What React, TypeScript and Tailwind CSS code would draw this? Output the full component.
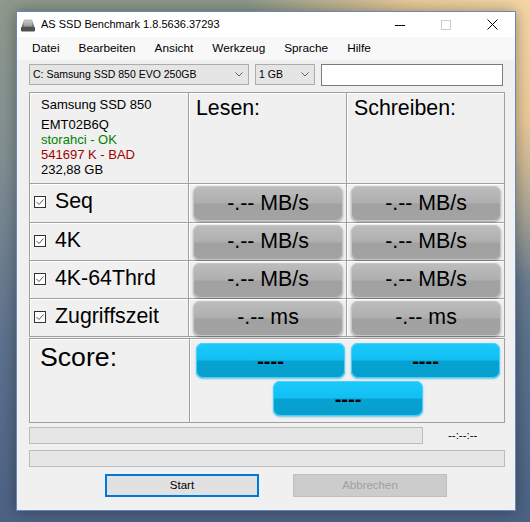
const rows = [
    {label: "Seq", read: "-.-- MB/s", write: "-.-- MB/s", h: "h-[38px]"},
    {label: "4K", read: "-.-- MB/s", write: "-.-- MB/s", h: "h-[37px]"},
    {label: "4K-64Thrd", read: "-.-- MB/s", write: "-.-- MB/s", h: "h-[37px]"},
    {label: "Zugriffszeit", read: "-.-- ms", write: "-.-- ms", h: "h-[37px]"},
];

const menu = ["Datei", "Bearbeiten", "Ansicht", "Werkzeug", "Sprache", "Hilfe"];

export default function App() {
    return (
        <div className="h-[522px] w-[530px] overflow-hidden bg-[radial-gradient(circle_at_100%_0%,#f4d6a6_0%,#e9c998_16%,rgba(200,180,150,0)_38%),linear-gradient(180deg,#8e998c_0%,#818f92_30%,#5c718d_65%,#4c6284_100%)] pl-[16px] pt-[11px] font-['Liberation_Sans',Arial,sans-serif] text-black">
            <div className="flex h-[500px] w-[500px] flex-col border border-[#6788b8] bg-[#f0f0f0] shadow-[0_0_14px_rgba(0,0,0,0.35)]">
                <TitleBar />
                <div className="flex h-[23px] items-center gap-[19px] bg-[#f8f8f8] pl-[15px] pt-[1px] text-[11.8px]">
                    {menu.map((m) => (
                        <span key={m}>{m}</span>
                    ))}
                </div>

                <div className="flex flex-col px-[12px] pt-[4px]">
                    <div className="flex items-start gap-[6px] text-[10.5px]">
                        <Select width="w-[221px]" text="C: Samsung SSD 850 EVO 250GB" />
                        <Select width="w-[60px]" text="1 GB" />
                        <div className="h-[22px] w-[183px] border border-[#7a7a7a] bg-white" />
                    </div>

                    <div className="mt-[6px] grid w-[476px] grid-cols-[158px_157px_157px] gap-px bg-[#a0a0a0] p-px">
                        <div className="h-[90px] border-l border-t border-white bg-[#f0f0f0] pl-[10px] pt-[3px] text-[13px] leading-[15px]">
                            <p className="mb-[5px]">Samsung SSD 850</p>
                            <p>EMT02B6Q</p>
                            <p className="text-[#008000]">storahci - OK</p>
                            <p className="text-[#a00000]">541697 K - BAD</p>
                            <p>232,88 GB</p>
                        </div>
                        <div className="h-[90px] border-l border-t border-white bg-[#f0f0f0] pl-[6px] pt-[4px] text-[21.33px] leading-none">
                            Lesen:
                        </div>
                        <div className="h-[90px] border-l border-t border-white bg-[#f0f0f0] pl-[6px] pt-[4px] text-[21.33px] leading-none">
                            Schreiben:
                        </div>

                        {rows.map((row) => (
                            <Row key={row.label} {...row} />
                        ))}
                    </div>

                    <div className="mt-px grid w-[476px] grid-cols-[159px_314px] gap-px bg-[#a0a0a0] p-px">
                        <div className="h-[83px] border-l border-t border-white bg-[#f0f0f0] pl-[9px] pt-[4px] text-[26.67px] leading-none">
                            Score:
                        </div>
                        <div className="flex h-[83px] flex-col border-l border-t border-white bg-[#f0f0f0] pt-[3px]">
                            <div className="flex gap-[6px] pl-[5px]">
                                <ScoreButton width="w-[149px]" />
                                <ScoreButton width="w-[149px]" />
                            </div>
                            <div className="mt-[3px] pl-[82px]">
                                <ScoreButton width="w-[150px]" />
                            </div>
                        </div>
                    </div>

                    <div className="mt-[4px] flex items-center">
                        <div className="h-[17px] w-[394px] border border-[#bcbcbc] bg-[#e6e6e6]" />
                        <span className="ml-[25px] text-[11.5px]">--:--:--</span>
                    </div>
                    <div className="mt-[6px] h-[17px] w-[476px] border border-[#bcbcbc] bg-[#e6e6e6]" />

                    <div className="mt-[7px] flex gap-[34px] pl-[76px] text-[11.5px]">
                        <button className="flex h-[23px] w-[154px] items-center justify-center border-2 border-[#0078d7] bg-[#e1e1e1]">
                            Start
                        </button>
                        <button className="flex h-[23px] w-[154px] items-center justify-center border border-[#bfbfbf] bg-[#cccccc] text-[#a0a0a0]">
                            Abbrechen
                        </button>
                    </div>
                </div>
            </div>
        </div>
    );
}

function TitleBar() {
    return (
        <div className="flex h-[25px] items-center bg-white">
            <svg width="16" height="14" viewBox="0 0 16 14" className="ml-[3px]">
                <defs>
                    <linearGradient id="drv" x1="0" y1="0" x2="0" y2="1">
                        <stop offset="0" stopColor="#c4c4c4" />
                        <stop offset="1" stopColor="#6c6c6c" />
                    </linearGradient>
                </defs>
                <path d="M4 1.5 H12 L14.5 9 H1.5 Z" fill="url(#drv)" />
                <rect x="1" y="9" width="14" height="4.5" rx="1" fill="#505050" />
                <path d="M5 3 V8.5 M7 3 V8.5 M9 3 V8.5 M11 3 V8.5" stroke="#e4e4e4" strokeWidth="0.7" />
            </svg>
            <span className="ml-[5px] text-[11px]">AS SSD Benchmark 1.8.5636.37293</span>
            <div className="ml-auto flex h-full">
                <div className="flex w-[46px] items-center justify-center">
                    <svg width="10" height="10" viewBox="0 0 10 10">
                        <path d="M0 5.5 H10" stroke="#000" strokeWidth="1" />
                    </svg>
                </div>
                <div className="flex w-[46px] items-center justify-center">
                    <svg width="10" height="10" viewBox="0 0 10 10">
                        <rect x="0.5" y="0.5" width="9" height="9" fill="none" stroke="#cccccc" />
                    </svg>
                </div>
                <div className="flex w-[46px] items-center justify-center">
                    <svg width="11" height="11" viewBox="0 0 11 11">
                        <path d="M0.5 0.5 L10.5 10.5 M10.5 0.5 L0.5 10.5" stroke="#000" strokeWidth="1" />
                    </svg>
                </div>
            </div>
        </div>
    );
}

function Select({width, text}: {width: string; text: string}) {
    return (
        <div className={`flex h-[21px] ${width} items-center justify-between border border-[#acacac] bg-[#e5e5e5] pl-[3px] pr-[5px]`}>
            <span>{text}</span>
            <svg width="8" height="5" viewBox="0 0 8 5">
                <polyline points="0.5,0.5 4,4 7.5,0.5" fill="none" stroke="#606060" />
            </svg>
        </div>
    );
}

function Row({label, read, write, h}: {label: string; read: string; write: string; h: string}) {
    return (
        <>
            <div className={`flex ${h} items-center gap-[9px] border-l border-t border-white bg-[#f0f0f0] pb-[3px] pl-[3px]`}>
                <svg width="12" height="12" viewBox="0 0 12 12">
                    <rect x="0.5" y="0.5" width="11" height="11" fill="#ffffff" stroke="#333333" />
                    <polyline points="2.5,6 5,8.5 9.5,3.5" fill="none" stroke="#555555" strokeWidth="1" />
                </svg>
                <span className="text-[21.33px] leading-none">{label}</span>
            </div>
            <div className={`flex ${h} items-center justify-center border-l border-t border-white bg-[#f0f0f0]`}>
                <GreyButton text={read} />
            </div>
            <div className={`flex ${h} items-center justify-center border-l border-t border-white bg-[#f0f0f0]`}>
                <GreyButton text={write} />
            </div>
        </>
    );
}

function GreyButton({text}: {text: string}) {
    return (
        <div className="flex h-[35px] w-[150px] items-center justify-center rounded-[7px] bg-[linear-gradient(180deg,#bdbdbd_0%,#afafaf_48%,#a1a1a1_52%,#a3a3a3_100%)] text-[21.33px] leading-none shadow-[inset_0_0_0_1px_#c6c6c6,0_1px_2px_rgba(0,0,0,0.35)]">
            {text}
        </div>
    );
}

function ScoreButton({width}: {width: string}) {
    return (
        <div className={`flex h-[35px] ${width} items-center justify-center rounded-[7px] bg-[linear-gradient(180deg,#1cc9fa_0%,#12bff3_48%,#06a2d1_52%,#079fcd_100%)] text-[20px] font-bold leading-none shadow-[inset_0_0_0_1px_#45d2ff,0_1px_2px_rgba(0,150,210,0.5)]`}>
            ----
        </div>
    );
}
